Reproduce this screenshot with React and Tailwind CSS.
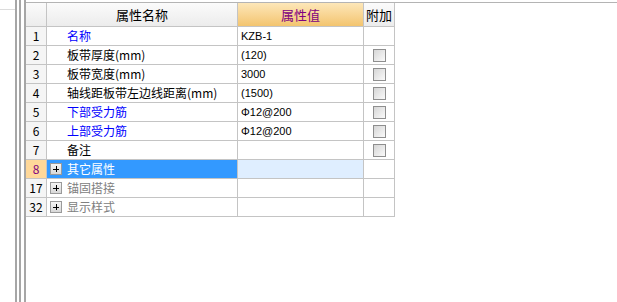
import React from "react";

const rows = [
  { no: "1", name: "名称", value: "KZB-1", blue: true, check: false },
  { no: "2", name: "板带厚度(mm)", value: "(120)", check: true },
  { no: "3", name: "板带宽度(mm)", value: "3000", check: true },
  { no: "4", name: "轴线距板带左边线距离(mm)", value: "(1500)", check: true },
  { no: "5", name: "下部受力筋", value: "Φ12@200", blue: true, check: true },
  { no: "6", name: "上部受力筋", value: "Φ12@200", blue: true, check: true },
  { no: "7", name: "备注", value: "", check: true },
];

const groups = [
  { no: "8", name: "其它属性", active: true },
  { no: "17", name: "锚固搭接" },
  { no: "32", name: "显示样式" },
];

function CheckBox() {
  return (
    <span className="block w-[13px] h-[13px] border border-[#8e8e8e] bg-gradient-to-br from-[#d6d6d6] to-[#fafafa]" />
  );
}

function PlusBox() {
  return (
    <span className="relative block w-[12px] h-[12px] border border-[#9a9a9a] bg-gradient-to-b from-[#f4f4f4] to-[#d8d8d8]">
      <span className="absolute left-[2px] top-[4.5px] w-[6px] h-[1px] bg-black" />
      <span className="absolute left-[4.5px] top-[2px] w-[1px] h-[6px] bg-black" />
    </span>
  );
}

const cell = "h-full border-r border-b border-[#c4c4c4] flex items-center";

export default function App() {
  return (
    <div
      className="w-[617px] h-[302px] bg-white flex overflow-hidden text-[12px] text-black"
      style={{ fontFamily: '"Noto Sans CJK SC", sans-serif' }}
    >
      <div className="w-[15px] h-full">
        <div className="h-[10px] border-b border-[#dcdcdc]" />
      </div>
      <div className="w-[2px] h-full bg-[#a6a6a6]" />
      <div className="w-[2px] h-full bg-white" />
      <div className="w-[2px] h-full bg-[#a6a6a6]" />
      <div className="w-[3px] h-full bg-white" />
      <div className="flex-1 h-full border-l-2 border-[#a6a6a6]">
        <div className="mt-[2px] border-t border-[#b4b4b4]">
          {/* header */}
          <div className="flex h-[24px] leading-none">
            <div className={`${cell} w-[21px] bg-gradient-to-b from-[#fbfbfb] to-[#ececec]`} />
            <div className={`${cell} w-[191px] justify-center text-[13px] bg-gradient-to-b from-[#fbfbfb] to-[#ececec]`}>
              属性名称
            </div>
            <div className={`${cell} w-[126px] justify-center text-[13px] text-[#800080] bg-gradient-to-b from-[#fde7b8] to-[#f3c46e]`}>
              属性值
            </div>
            <div className={`${cell} w-[31px] justify-center text-[13px] bg-gradient-to-b from-[#fbfbfb] to-[#ececec]`}>
              附加
            </div>
          </div>

          {rows.map((r) => (
            <div key={r.no} className="flex h-[19px] leading-none">
              <div className={`${cell} w-[21px] justify-center bg-[#f5f5f5]`}>{r.no}</div>
              <div className={`${cell} w-[191px] pl-[20px] ${r.blue ? "text-[#0000ff]" : ""}`}>
                {r.name}
              </div>
              <div
                className={`${cell} w-[126px] pl-[3px] text-[11px]`}
                style={{ fontFamily: '"Liberation Sans", "Noto Sans CJK SC", sans-serif' }}
              >
                {r.value}
              </div>
              <div className={`${cell} w-[31px] justify-center`}>{r.check && <CheckBox />}</div>
            </div>
          ))}

          {groups.map((g) => (
            <div key={g.no} className="flex h-[19px] leading-none">
              <div
                className={`${cell} w-[21px] justify-center ${
                  g.active ? "bg-[#ffd899] text-[#800080]" : "bg-[#f5f5f5]"
                }`}
              >
                {g.no}
              </div>
              <div
                className={`${cell} w-[191px] pl-[3px] gap-[5px] ${
                  g.active ? "bg-[#3399ff] text-white" : "text-[#808080]"
                }`}
              >
                <PlusBox />
                <span>{g.name}</span>
              </div>
              <div className={`${cell} w-[126px] ${g.active ? "bg-[#dfeeff]" : ""}`} />
              <div className={`${cell} w-[31px]`} />
            </div>
          ))}
        </div>
      </div>
    </div>
  );
}
